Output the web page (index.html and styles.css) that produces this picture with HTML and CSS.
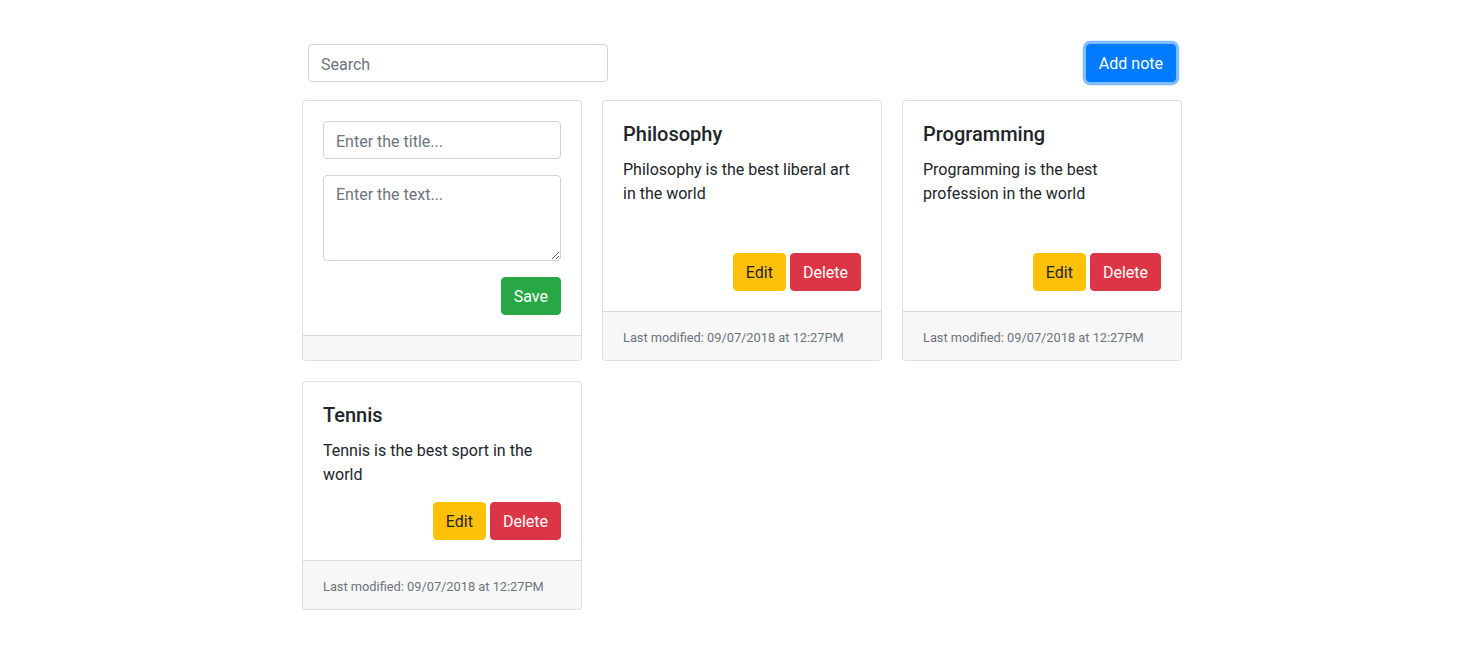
FILE: index.html
```html
<!DOCTYPE html>
<html lang="en">
<head>
<meta charset="utf-8">
<title>Notes</title>
<link rel="stylesheet" href="styles.css">
</head>
<body>
<div class="wrap">
  <div class="toolbar">
    <input class="form-control search" type="text" placeholder="Search">
    <button class="btn btn-primary focused">Add note</button>
  </div>
  <div class="grid">
    <div class="card">
      <div class="card-body">
        <input class="form-control field" type="text" placeholder="Enter the title...">
        <textarea class="form-control field" rows="3" placeholder="Enter the text..."></textarea>
        <div class="actions"><button class="btn btn-success">Save</button></div>
      </div>
      <div class="card-footer empty"></div>
    </div>
    <div class="card">
      <div class="card-body">
        <h5 class="card-title">Philosophy</h5>
        <p class="card-text">Philosophy is the best liberal art in the world</p>
        <div class="actions"><button class="btn btn-warning">Edit</button><button class="btn btn-danger">Delete</button></div>
      </div>
      <div class="card-footer"><small class="muted">Last modified: 09/07/2018 at 12:27PM</small></div>
    </div>
    <div class="card">
      <div class="card-body">
        <h5 class="card-title">Programming</h5>
        <p class="card-text">Programming is the best profession in the world</p>
        <div class="actions"><button class="btn btn-warning">Edit</button><button class="btn btn-danger">Delete</button></div>
      </div>
      <div class="card-footer"><small class="muted">Last modified: 09/07/2018 at 12:27PM</small></div>
    </div>
    <div class="card">
      <div class="card-body">
        <h5 class="card-title">Tennis</h5>
        <p class="card-text">Tennis is the best sport in the world</p>
        <div class="actions"><button class="btn btn-warning">Edit</button><button class="btn btn-danger">Delete</button></div>
      </div>
      <div class="card-footer"><small class="muted">Last modified: 09/07/2018 at 12:27PM</small></div>
    </div>
  </div>
</div>
</body>
</html>
```

FILE: styles.css
```css
* { box-sizing: border-box; }
html, body { margin: 0; background: #fff; }
body {
  font-family: Roboto, "Liberation Sans", sans-serif;
  font-size: 16px;
  line-height: 1.5;
  color: #212529;
}
.wrap {
  width: 880px;
  margin-left: 302px;
  padding-top: 44px;
}
.toolbar {
  display: flex;
  justify-content: space-between;
  align-items: center;
  padding: 0 6px;
  margin-bottom: 18px;
}
.form-control {
  display: block;
  font-family: inherit;
  font-size: 16px;
  line-height: 1.5;
  color: #495057;
  background: #fff;
  border: 1px solid #ced4da;
  border-radius: 4px;
  padding: 7px 12px 5px;
  height: 38px;
  outline: none;
  margin: 0;
}
.form-control::placeholder { color: #6c757d; opacity: 1; }
.search { width: 300px; }
textarea.form-control { height: 86px; resize: vertical; }
.field { width: 100%; margin-bottom: 16px; }
.btn {
  font-family: inherit;
  font-size: 16px;
  line-height: 1.5;
  padding: 7px 12px 5px;
  border: 1px solid transparent;
  border-radius: 4px;
  cursor: pointer;
  display: inline-block;
  height: 38px;
}
.btn-primary { background: #007bff; border-color: #007bff; color: #fff; }
.btn-primary.focused { box-shadow: 0 0 0 3.2px rgba(0,123,255,.5); }
.btn-success { background: #28a745; border-color: #28a745; color: #fff; }
.btn-warning { background: #ffc107; border-color: #ffc107; color: #212529; }
.btn-danger { background: #dc3545; border-color: #dc3545; color: #fff; }
.grid {
  display: grid;
  grid-template-columns: repeat(3, 280px);
  column-gap: 20px;
  row-gap: 20px;
}
.card {
  display: flex;
  flex-direction: column;
  border: 1px solid rgba(0,0,0,.125);
  border-radius: 4px;
  background: #fff;
  overflow: hidden;
}
.card-body {
  flex: 1 1 auto;
  padding: 20px;
  display: flex;
  flex-direction: column;
}
.card-title {
  font-size: 20px;
  font-weight: 500;
  line-height: 24px;
  margin: 0 0 12px;
  position: relative;
  top: 1px;
}
.card-text { margin: 0 0 16px; position: relative; top: 1px; }
.actions {
  margin-top: auto;
  display: flex;
  justify-content: flex-end;
  gap: 4px;
}
.card-footer {
  flex: none;
  height: 49px;
  padding: 14px 20px 10px;
  background: rgba(0,0,0,.03);
  border-top: 1px solid rgba(0,0,0,.125);
}
.card-footer.empty { height: 25px; padding: 0; }
.muted { display: block; font-size: 12.8px; line-height: 24px; color: #6c757d; }
```
